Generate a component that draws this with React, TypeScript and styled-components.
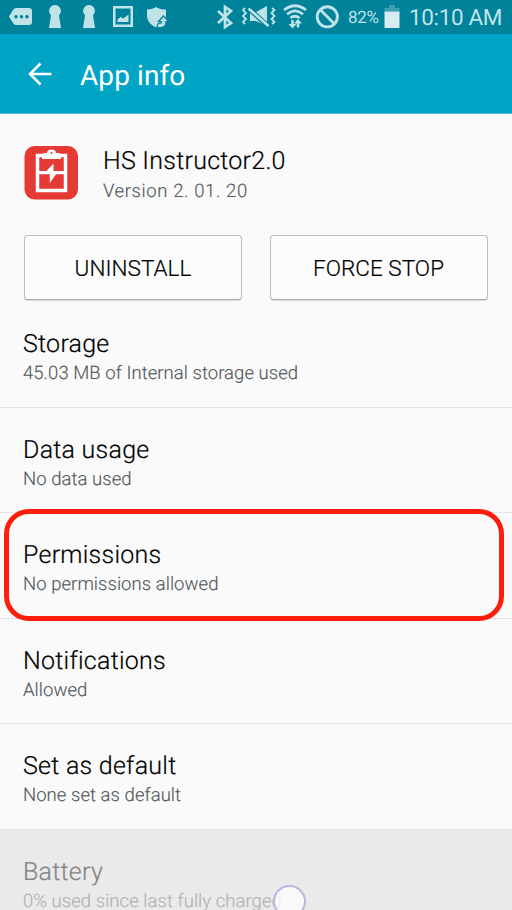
import React from "react";
import styled, { createGlobalStyle } from "styled-components";

const GlobalStyle = createGlobalStyle`
  * { box-sizing: border-box; }
  html, body { margin: 0; padding: 0; background: #fafafa; overflow: hidden; }
`;

const Screen = styled.main`
  position: relative;
  display: flex;
  flex-direction: column;
  width: 512px;
  height: 910px;
  overflow: hidden;
  background: #fafafa;
  font-family: Roboto, sans-serif;
  font-weight: 300;
  color: #000;
  text-rendering: geometricPrecision;
`;

const StatusBar = styled.header`
  display: flex;
  flex: none;
  align-items: flex-start;
  justify-content: space-between;
  height: 34px;
  background: #00829b;
  color: #bfe3e9;
`;

const IconGroup = styled.div`
  display: flex;
  flex: none;
  height: 34px;
`;

const StatusIcon = styled.svg<{ $gap?: number }>`
  display: block;
  flex: none;
  height: 34px;
  margin-left: ${(p) => p.$gap ?? 0}px;
  fill: currentColor;
`;

const StatusText = styled.span<{ $size: number; $width: number; $gap: number; $spacing?: number }>`
  flex: none;
  width: ${(p) => p.$width}px;
  margin-left: ${(p) => p.$gap}px;
  font-size: ${(p) => p.$size}px;
  font-weight: 400;
  line-height: 36px;
  letter-spacing: ${(p) => p.$spacing ?? 0}px;
  white-space: nowrap;
`;

const AppBar = styled.div`
  display: flex;
  flex: none;
  align-items: center;
  height: 80px;
  padding: 5px 0 0 28px;
  background: #00a5c5;
  border-bottom: 1px solid #4fbbd3;
  color: #fff;
`;

const BackIcon = styled.svg`
  width: 24px;
  height: 24px;
  margin-top: -5px;
  fill: none;
  stroke: currentColor;
  stroke-width: 2.5;
`;

const Title = styled.h1`
  margin: 0 0 0 28px;
  font-size: 28px;
  font-weight: 400;
  line-height: 36px;
  letter-spacing: 0.1px;
`;

const AppHeader = styled.section`
  display: flex;
  flex: none;
  height: 121px;
  padding: 31px 24px 0;
`;

const AppIcon = styled.svg`
  width: 55px;
  height: 56px;
`;

const AppText = styled.div`
  margin: 2px 0 0 24px;
`;

const Name = styled.h2<{ $spacing?: number }>`
  margin: 0;
  font-size: 25px;
  font-weight: 300;
  line-height: 30px;
  letter-spacing: ${(p) => p.$spacing ?? 0.25}px;
  white-space: nowrap;
  -webkit-text-stroke: 0.2px currentColor;
`;

const Detail = styled.p<{ $spacing?: number }>`
  margin: 0;
  font-size: 18.5px;
  line-height: 28px;
  letter-spacing: ${(p) => p.$spacing ?? 0.05}px;
  white-space: nowrap;
  -webkit-text-stroke: 0.15px currentColor;
  color: #52585c;
`;

const Actions = styled.section`
  display: grid;
  flex: none;
  grid-template-columns: 218px 218px;
  gap: 27.5px;
  height: 67px;
  padding-left: 24px;
`;

const ActionButton = styled.button`
  height: 65px;
  padding: 0;
  border: 1px solid #bcbcbc;
  border-bottom-color: #a9a9a9;
  border-radius: 4px;
  background: #fcfcfc;
  box-shadow: 0 1px 1px rgba(0, 0, 0, 0.13);
  font: 300 22.5px/30px Roboto, sans-serif;
  letter-spacing: 0.05px;
  -webkit-text-stroke: 0.2px currentColor;
  color: #000;
`;

const Settings = styled.section`
  display: flex;
  flex: none;
  flex-direction: column;
`;

const SettingRow = styled.article<{ $disabled?: boolean }>`
  position: relative;
  flex: none;
  height: 105.5px;
  padding: 28px 23px 0;
  border-bottom: 1px solid #e3e3e3;
  background: ${(p) => (p.$disabled ? "#eaeaea" : "transparent")};

  ${Name} { color: ${(p) => (p.$disabled ? "#858585" : "#000")}; }
  ${Detail} {
    margin-top: -1px;
    color: ${(p) => (p.$disabled ? "#b0b2b3" : "#52585c")};
  }
`;

const Highlight = styled.div`
  position: absolute;
  z-index: 1;
  top: -4px;
  left: 4px;
  width: 500px;
  height: 112px;
  border: 5px solid #ff1d0b;
  border-radius: 25px;
`;

const TouchDot = styled.div`
  position: absolute;
  top: 885px;
  left: 273px;
  width: 33px;
  height: 33px;
  border: 2px solid #b5b8e2;
  border-radius: 50%;
  background: rgba(252, 252, 252, 0.85);
`;

const rows = [
  { title: "Storage", detail: "45.03 MB of Internal storage used" },
  { title: "Data usage", detail: "No data used" },
  { title: "Permissions", detail: "No permissions allowed", highlighted: true },
  { title: "Notifications", detail: "Allowed" },
  { title: "Set as default", detail: "None set as default" },
  { title: "Battery", detail: "0% used since last fully charged", disabled: true },
];

const Keyhole = ({ gap }: { gap: number }) => (
  <StatusIcon width={14} viewBox="0 0 14 34" $gap={gap}>
    <path d="M7 5a6 6 0 0 1 4 10.300L13 28H1l2-12.700A6 6 0 0 1 7 5Z" />
  </StatusIcon>
);

export default function App() {
  return (
    <Screen>
      <GlobalStyle />
      <StatusBar>
        <IconGroup>
          <StatusIcon width={24} viewBox="8 0 24 34" $gap={8}>
            <path fillRule="evenodd" d="M16 8h13q3 0 3 3v11q0 3-3 3H16q-2 0-3-2l-4-6.500 4-6.500q1-2 3-2ZM16 15a1.700 1.700 0 1 0 .01 0ZM21.500 15a1.700 1.700 0 1 0 .01 0ZM27 15a1.700 1.700 0 1 0 .01 0Z" />
          </StatusIcon>
          <Keyhole gap={16} />
          <Keyhole gap={20} />
          <StatusIcon width={20} viewBox="113 0 20 34" $gap={17}>
            <path fillRule="evenodd" d="M113 6h20v21h-20ZM115.500 8.500v16h15v-16ZM117.500 22v-2.500l3-2.500 3 1.500 5-4V22Z" />
          </StatusIcon>
          <StatusIcon width={22} viewBox="146 0 22 34" $gap={13}>
            <path d="M156 7c3 2 6 2.500 10 2.500v6c0 5-4 9-10 12-6-3-9-7-9-12v-6c4 0 7-1 9-2.500Z" />
            <path d="M163.500 16l5 5.500h-2.500c0 4-2 6-5 6h-4.500l2-4.500c2 1 3 0 3-1.500h-3Z" stroke="#00829b" strokeWidth="1.200" />
          </StatusIcon>
        </IconGroup>
        <IconGroup>
          <StatusIcon width={18} viewBox="216 0 18 34">
            <path d="M218 11l13 12-6 4V7l6 4-13 12" fill="none" stroke="currentColor" strokeWidth="2.700" />
          </StatusIcon>
          <StatusIcon width={34} viewBox="242 0 34 34" $gap={8}>
            <path d="M250 12h6l11-6v20l-11-5h-6Z" />
            <path d="M247 7l22 20" stroke="#00829b" strokeWidth="5" />
            <path d="M248.500 8.500l20 17.500" fill="none" stroke="currentColor" strokeWidth="2.700" />
            <path d="M245 8l-2 2 3 3-3 3 3 3-3 3 2 2M272 8l2.500 2-3 3 3 3-3 3 3 3-2.500 2" fill="none" stroke="currentColor" strokeWidth="1.800" />
          </StatusIcon>
          <StatusIcon width={24} viewBox="283 0 24 34" $gap={7}>
            <g fill="none" stroke="currentColor" strokeWidth="2.700">
              <path d="M284 10q11-8.500 22 0M287 14.200q8-6.500 16 0M290.500 18q4.500-3.500 9 0" />
              <path d="M292.500 20v6M298 21v6.500" strokeWidth="2.500" />
            </g>
            <path d="M288.500 24h8l-4 4.500ZM294 23.500h8L298 19Z" />
          </StatusIcon>
          <StatusIcon width={24} viewBox="315 0 24 34" $gap={8}>
            <g fill="none" stroke="currentColor" strokeWidth="2.900">
              <circle cx="327.300" cy="16.800" r="10.100" />
              <path d="M320 9.500l14.500 14.500" />
            </g>
          </StatusIcon>
          <StatusText $size={17} $width={32} $gap={9} $spacing={-0.3}>82%</StatusText>
          <StatusIcon width={16} viewBox="384 0 16 34" $gap={4}>
            <path d="M389 5h6v3h4.500v3.500h-15V8h4.500Z" fill="#3c9fb2" />
            <path d="M384.500 11.500h15V28h-15Z" fill="#d7edf1" />
          </StatusIcon>
          <StatusText $size={22.5} $width={103} $gap={9} $spacing={-0.35}>10:10 AM</StatusText>
        </IconGroup>
      </StatusBar>
      <AppBar>
        <BackIcon viewBox="0 0 24 24"><path d="M12.500 1.500L2 12l10.500 10.500M1.500 12h22" /></BackIcon>
        <Title>App info</Title>
      </AppBar>
      <AppHeader>
        <AppIcon viewBox="24 145 55 56">
          <rect x="24.500" y="146" width="53.500" height="53.500" rx="10" fill="#e53934" />
          <path d="M37.500 155.500h28v35h-28Z" fill="none" stroke="#fff" strokeWidth="3.500" />
          <path d="M42 159v-4q0-2 3-2h2q0-3.500 4.500-3.500t4.500 3.500h2q3 0 3 2v4Z" fill="#fff" />
          <circle cx="51.500" cy="153" r="1" fill="#e53934" />
          <path d="M38 171h8.500l7-7.500v7.500h12v3.200H56L49.800 183v-8.800H38Z" fill="#fff" />
        </AppIcon>
        <AppText>
          <Name>HS Instructor2.0</Name>
          <Detail $spacing={0.6}>Version 2. 01. 20</Detail>
        </AppText>
      </AppHeader>
      <Actions>
        <ActionButton>UNINSTALL</ActionButton>
        <ActionButton>FORCE STOP</ActionButton>
      </Actions>
      <Settings>
        {rows.map((row) => (
          <SettingRow key={row.title} $disabled={row.disabled}>
            <Name>{row.title}</Name>
            <Detail>{row.detail}</Detail>
            {row.highlighted && <Highlight />}
          </SettingRow>
        ))}
      </Settings>
      <TouchDot />
    </Screen>
  );
}
